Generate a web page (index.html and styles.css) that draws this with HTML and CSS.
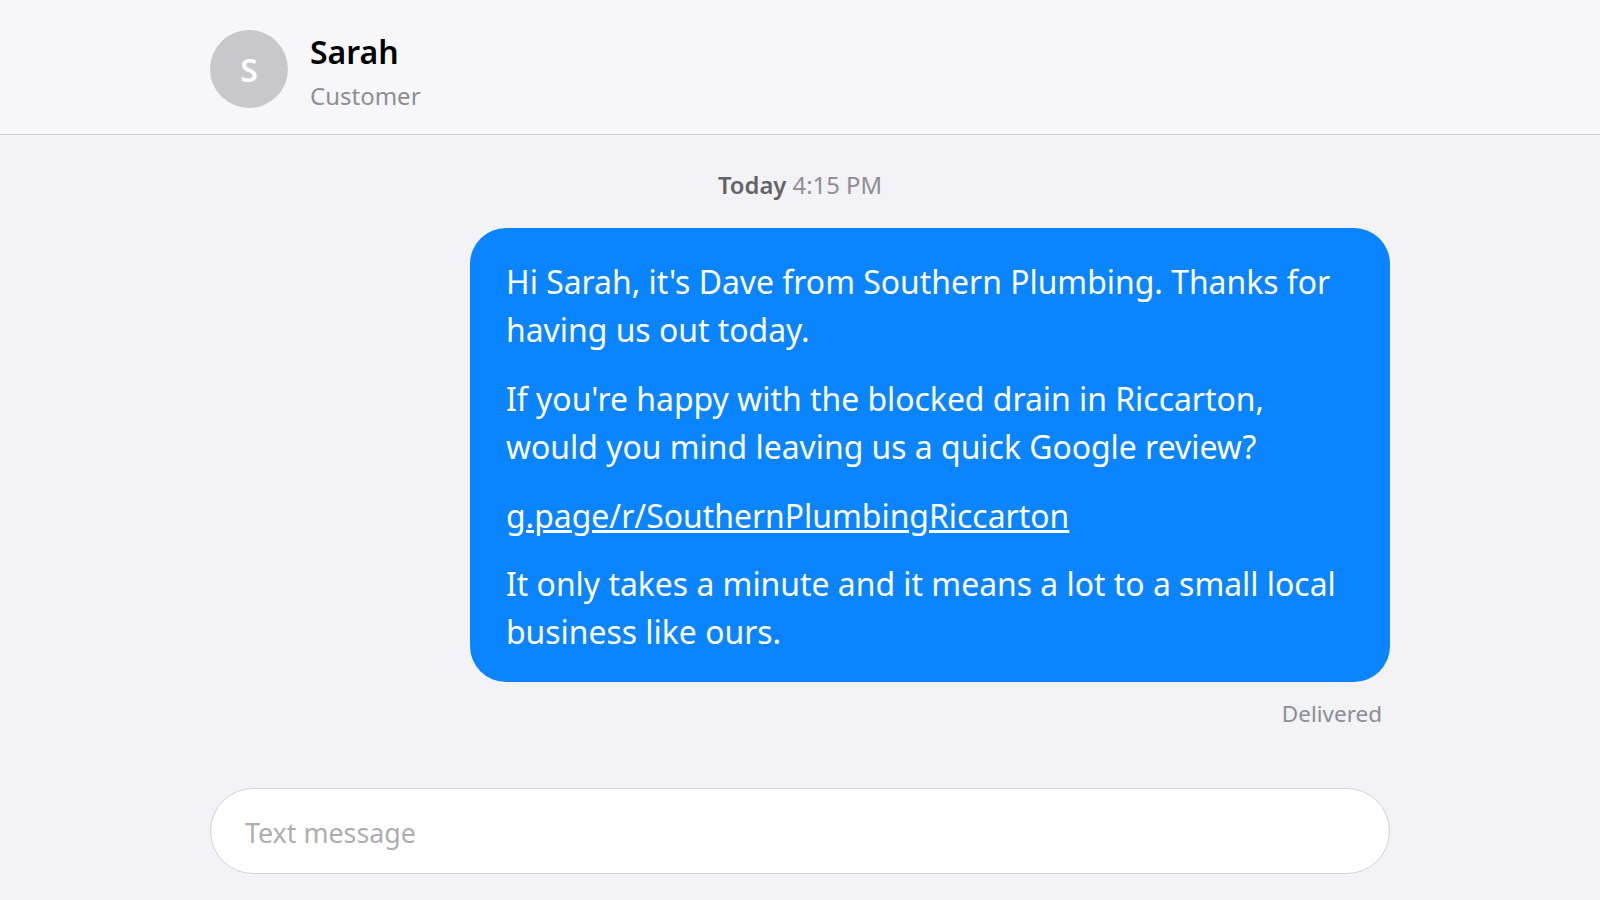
FILE: index.html
```html
<!DOCTYPE html>
<html lang="en">
<head>
<meta charset="utf-8">
<title>Sarah</title>
<link rel="stylesheet" href="styles.css">
</head>
<body>
<header class="header">
  <div class="header-inner">
    <div class="avatar">S</div>
    <div class="contact">
      <div class="name">Sarah</div>
      <div class="role">Customer</div>
    </div>
  </div>
</header>
<main class="thread">
  <div class="stamp"><strong>Today</strong> 4:15 PM</div>
  <div class="bubble">
    <p>Hi Sarah, it's Dave from Southern Plumbing. Thanks for having us out today.</p>
    <p>If you're happy with the blocked drain in Riccarton, would you mind leaving us a quick Google review?</p>
    <p><a href="#">g.page/r/SouthernPlumbingRiccarton</a></p>
    <p>It only takes a minute and it means a lot to a small local business like ours.</p>
  </div>
  <div class="status">Delivered</div>
  <div class="composer">Text message</div>
</main>
</body>
</html>
```
FILE: styles.css
```css
* { box-sizing: border-box; }
html, body { margin: 0; height: 100%; }
body { background: #f2f2f7; font-family: "Noto Sans", sans-serif; overflow: hidden; }
.header { background: #f7f7fa; border-bottom: 1px solid #d1d1d6; height: 135px; }
.header-inner { width: 1180px; margin: 0 auto; display: flex; align-items: flex-start; gap: 22px; padding-top: 30px; }
.avatar { width: 78px; height: 78px; border-radius: 50%; background: #c7c7cc; color: #fff; font-size: 32px; font-weight: 600; display: flex; align-items: center; justify-content: center; }
.name { font-size: 32px; font-weight: 600; color: #000; line-height: 44px; margin-bottom: 6px; }
.role { font-size: 24px; color: #8e8e93; line-height: 32px; }
.thread { width: 1180px; margin: 0 auto; display: flex; flex-direction: column; align-items: flex-end; }
.stamp { align-self: center; font-size: 23.8px; color: #8e8e93; margin-top: 34px; line-height: 32px; }
.stamp strong { color: #636366; font-weight: 600; }
.bubble { width: 920px; background: #0a84ff; color: #fff; border-radius: 36px; padding: 30px 36px 25px; margin-top: 27px; font-size: 31.9px; line-height: 48.4px; }
.bubble p { margin: 0 0 20px; }
.bubble p:last-child { margin: 0; }
.bubble a { color: #fff; }
.status { font-size: 22.5px; color: #8e8e93; margin: 17px 8px 0 0; line-height: 30px; }
.composer { align-self: stretch; margin-top: 59px; height: 86px; border: 1px solid #d1d1d6; border-radius: 43px; background: #fff; color: #aeaeb2; font-size: 26.8px; display: flex; align-items: center; padding: 4px 34px 0; }
```
